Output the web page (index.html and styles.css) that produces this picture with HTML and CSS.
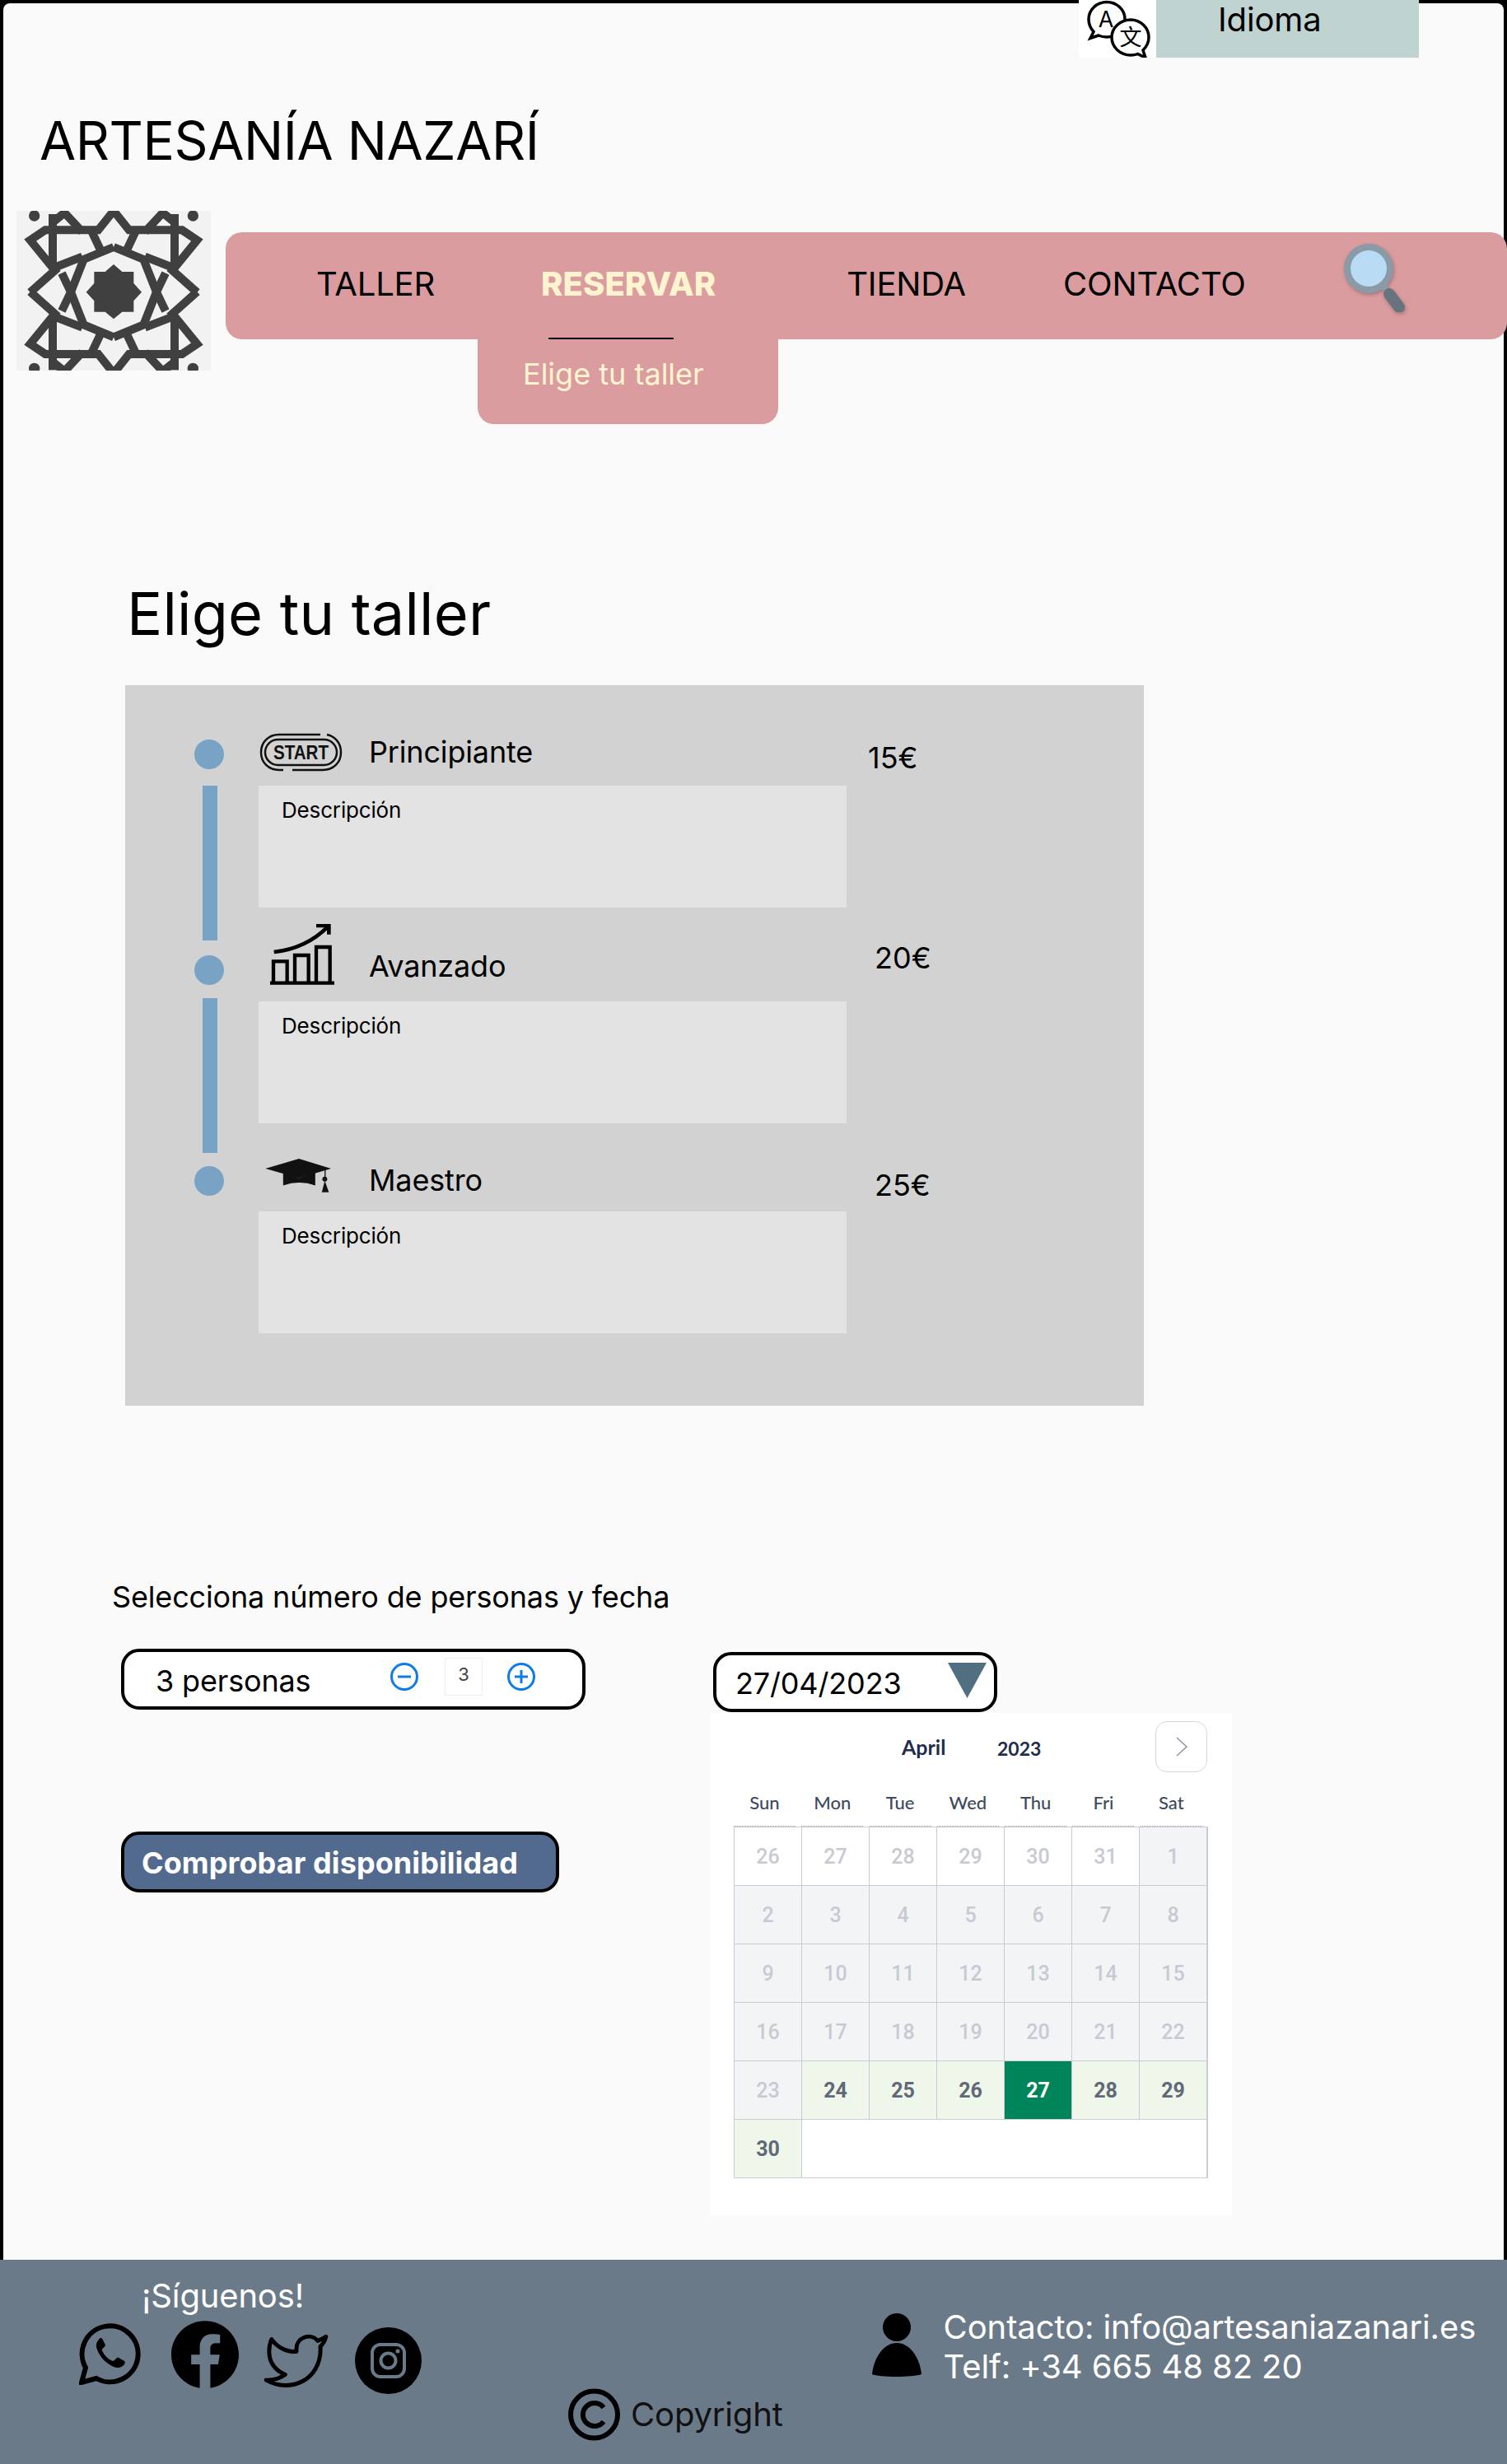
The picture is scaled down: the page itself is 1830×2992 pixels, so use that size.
FILE: index.html
```html
<!DOCTYPE html>
<html lang="es">
<head>
    <meta charset="UTF-8">
    <meta name="viewport" content="width=device-width, initial-scale=1.0">
    <title>Elige tu taller</title>
    <link rel="stylesheet" href="styles.css">
</head>
<body>
<div class="frame">
    <div class="lang-row">
        <div class="lang-icon">
            <svg width="94" height="70" viewBox="0 0 94 70">
                <path class="bubble" d="M34 2.500c-12.500 0-22 9.500-22 21 0 6 2.500 11 6 15l-4 8 10-3.500c3 1.300 6.500 2 10 2 12 0 22-9.500 22-21.500S46 2.500 34 2.500z"/>
                <text x="33" y="33" class="bubble-a">A</text>
                <path class="bubble" d="M63 24c-12.500 0-23 9.500-23 21.500S50.500 67 63 67c3 0 6-.5 8.500-1.500L81 70l-3-9c4-4 7-9.500 7-15.500C85 33.500 75 24 63 24z"/>
                <text x="63" y="55" class="bubble-b">文</text>
            </svg>
        </div>
        <div class="lang-box">Idioma</div>
    </div>

    <h1 class="brand">ARTESANÍA NAZARÍ</h1>

    <header class="top">
        <svg class="logo" width="236" height="194" viewBox="60 48 708 582">
            <defs>
                <g id="tile-quarter" class="tile">
                    <path d="M414 48L358 118H165L110 155L200 265L110 345"/>
                    <path d="M192 60V255"/>
                    <path d="M192 90L235 55L300 125"/>
                    <path d="M335 125L368 195"/>
                    <path d="M205 252L300 215"/>
                    <path d="M414 180L305 225L258 344"/>
                    <path d="M225 275L258 344"/>
                    <circle class="tile-dot" cx="125" cy="66" r="20"/>
                </g>
            </defs>
            <rect x="60" y="48" width="708" height="582" fill="#f2f2f2"/>
            <use href="#tile-quarter"/>
            <use href="#tile-quarter" transform="matrix(-1 0 0 1 828 0)"/>
            <use href="#tile-quarter" transform="matrix(1 0 0 -1 0 688)"/>
            <use href="#tile-quarter" transform="matrix(-1 0 0 -1 828 688)"/>
            <path fill="#404040" d="M414 243L445 270H487V312L516 344L487 376V416H445L414 442L383 416H343V376L314 344L343 312V270H383z"/>
        </svg>
        <nav class="nav">
            <a class="nav-item nav-taller">TALLER</a>
            <a class="nav-item nav-reservar">RESERVAR</a>
            <a class="nav-item nav-tienda">TIENDA</a>
            <a class="nav-item nav-contacto">CONTACTO</a>
            <svg class="search-icon" width="75" height="83" viewBox="0 0 75 83">
                <path d="M47 56l6-4" stroke="#8a9aa6" stroke-width="9" fill="none"/>
                <path d="M55 61L67 77" stroke="#67747f" stroke-width="14" stroke-linecap="round" fill="none"/>
                <circle cx="30" cy="30" r="30" fill="#8a9aa6"/>
                <circle cx="30" cy="30" r="22" fill="#b9dbf3"/>
            </svg>
            <div class="dropdown">
                <div class="dropdown-rule"></div>
                <a class="dropdown-item">Elige tu taller</a>
            </div>
        </nav>
    </header>

    <h2 class="section-title">Elige tu taller</h2>

    <section class="panel">
        <div class="rail">
            <div class="dot"></div>
            <div class="bar bar-one"></div>
            <div class="dot dot-two"></div>
            <div class="bar bar-two"></div>
            <div class="dot dot-three"></div>
        </div>
        <div class="workshops">
            <div class="ws-head ws-head-one">
                <div class="ws-icon">
                    <svg class="icon-start" width="101" height="47" viewBox="0 0 101 47">
                        <path class="start-line" d="M74 2H24C11 2 2 11 2 23.500S11 45 24 45h5M40 45h37c13 0 22-9 22-21.500S91 4 82 2"/>
                        <rect class="start-line" x="7" y="8" width="87" height="31" rx="15.500"/>
                        <text x="50.500" y="32" class="start-text" textLength="67" lengthAdjust="spacingAndGlyphs">START</text>
                    </svg>
                </div>
                <div class="ws-name">Principiante</div>
                <div class="ws-price">15€</div>
            </div>
            <div class="ws-desc">Descripción</div>

            <div class="ws-head ws-head-two">
                <div class="ws-icon">
                    <svg class="icon-chart" width="78" height="74" viewBox="324 66 234 222">
                        <path d="M324 281H558M336 281V202H386V281M414 281V180H464V281M492 281V150H542V281" fill="none" stroke="#000" stroke-width="13"/>
                        <path d="M338 168C410 160 480 130 534 76M492 72H538V104" fill="none" stroke="#000" stroke-width="14"/>
                    </svg>
                </div>
                <div class="ws-name">Avanzado</div>
                <div class="ws-price">20€</div>
            </div>
            <div class="ws-desc">Descripción</div>

            <div class="ws-head ws-head-three">
                <div class="ws-icon">
                    <svg class="icon-cap" width="81" height="41" viewBox="305 922 243 124">
                        <path fill="#111" d="M305 958L428 922L546 958L428 993z"/>
                        <path fill="#111" d="M370 972L428 993L488 972V1020Q430 1000 370 1020z"/>
                        <path stroke="#111" stroke-width="4" d="M524 964V990"/>
                        <circle fill="#111" cx="523" cy="997" r="9"/>
                        <path fill="#111" d="M523 1003L538 1045H512z"/>
                    </svg>
                </div>
                <div class="ws-name">Maestro</div>
                <div class="ws-price">25€</div>
            </div>
            <div class="ws-desc">Descripción</div>
        </div>
    </section>

    <p class="booking-label">Selecciona número de personas y fecha</p>

    <section class="booking">
        <div class="booking-left">
            <div class="pill people">
                <span class="people-text">3 personas</span>
                <svg class="round-btn" width="34" height="34" viewBox="0 0 34 34">
                    <circle cx="17" cy="17" r="15.500"/>
                    <path d="M9 17H25"/>
                </svg>
                <span class="people-count">3</span>
                <svg class="round-btn" width="34" height="34" viewBox="0 0 34 34">
                    <circle cx="17" cy="17" r="15.500"/>
                    <path d="M9 17H25M17 9V25"/>
                </svg>
            </div>
            <button class="check-btn">Comprobar disponibilidad</button>
        </div>
        <div class="booking-right">
            <div class="pill date">
                <span>27/04/2023</span>
                <svg class="date-arrow" width="47" height="43" viewBox="0 0 47 43">
                    <path d="M0 0H47L23.500 43z" fill="#507082"/>
                </svg>
            </div>
            <div class="calendar">
                <div class="cal-head">
                    <span class="cal-month">April</span>
                    <span class="cal-year">2023</span>
                    <span class="cal-next">
                        <svg width="16" height="26" viewBox="0 0 16 26"><path d="M2 2L14 13L2 24" fill="none" stroke="#8d929e" stroke-width="1.500"/></svg>
                    </span>
                </div>
                <div class="cal-week">
                    <span>Sun</span><span>Mon</span><span>Tue</span><span>Wed</span><span>Thu</span><span>Fri</span><span>Sat</span>
                </div>
                <div class="cal-days">
                    <span class="day prev">26</span><span class="day prev">27</span><span class="day prev">28</span><span class="day prev">29</span><span class="day prev">30</span><span class="day prev">31</span><span class="day off">1</span>
                    <span class="day off">2</span><span class="day off">3</span><span class="day off">4</span><span class="day off">5</span><span class="day off">6</span><span class="day off">7</span><span class="day off">8</span>
                    <span class="day off">9</span><span class="day off">10</span><span class="day off">11</span><span class="day off">12</span><span class="day off">13</span><span class="day off">14</span><span class="day off">15</span>
                    <span class="day off">16</span><span class="day off">17</span><span class="day off">18</span><span class="day off">19</span><span class="day off">20</span><span class="day off">21</span><span class="day off">22</span>
                    <span class="day off">23</span><span class="day open">24</span><span class="day open">25</span><span class="day open">26</span><span class="day picked">27</span><span class="day open">28</span><span class="day open">29</span>
                    <span class="day open">30</span><span class="day blank"></span>
                </div>
            </div>
        </div>
    </section>
</div>

<footer class="footer">
    <div class="follow">
        <div class="follow-title">¡Síguenos!</div>
        <div class="social">
            <svg class="social-wa" width="75" height="75" viewBox="0 0 75 75">
                <path d="M3 72l5-18A34 34 0 1 1 21 67z" fill="none" stroke="#000" stroke-width="6" stroke-linejoin="miter"/>
                <path d="M24 20c-3 3-4 7-2 12 3 9 11 17 20 21 5 2 10 1 13-3 1-2 1-3 0-4l-7-4c-1-.5-2 0-3 1l-2 2c-1 1-2 1-3 .5-5-2-9-6-12-12-.5-1 0-2 1-3l2-2c1-1 1-2 .5-3l-3-6c-1-2-3-2-4.500 0z" fill="#000"/>
            </svg>
            <svg class="social-fb" width="82" height="82" viewBox="0 0 24 24">
                <path fill="#000" d="M24 12.073c0-6.627-5.373-12-12-12s-12 5.373-12 12c0 5.990 4.388 10.954 10.125 11.854v-8.385H7.078v-3.470h3.047V9.430c0-3.007 1.792-4.669 4.533-4.669 1.312 0 2.686.235 2.686.235v2.953H15.830c-1.491 0-1.956.925-1.956 1.874v2.250h3.328l-.532 3.470h-2.796v8.385C19.612 23.027 24 18.062 24 12.073z"/>
            </svg>
            <svg class="social-tw" width="81" height="66" viewBox="0 2 24 20">
                <path fill="none" stroke="#000" stroke-width="1.500" stroke-linejoin="round" d="M23 3a10.900 10.900 0 0 1-3 1.530 4.480 4.480 0 0 0-7.860 3v1A10.660 10.660 0 0 1 3 4s-4 9 5 13a11.640 11.640 0 0 1-7 2c9 5 20 0 20-11.500a4.500 4.500 0 0 0-.08-.83A7.720 7.720 0 0 0 23 3z"/>
            </svg>
            <svg class="social-ig" width="81" height="81" viewBox="0 0 81 81">
                <circle cx="40.500" cy="40.500" r="40.500" fill="#000"/>
                <rect x="21" y="21" width="39" height="39" rx="10" fill="none" stroke="#6b7a89" stroke-width="4"/>
                <circle cx="40.500" cy="40.500" r="9" fill="none" stroke="#6b7a89" stroke-width="4"/>
                <circle cx="52" cy="29" r="2.500" fill="#6b7a89"/>
            </svg>
        </div>
    </div>
    <div class="copyright">
        <svg width="63" height="64" viewBox="0 0 63 64">
            <circle cx="31.500" cy="32" r="28.500" fill="none" stroke="#000" stroke-width="6"/>
            <path d="M43 23.500a14 14 0 1 0 0 17" fill="none" stroke="#000" stroke-width="6"/>
        </svg>
        <span class="copyright-text">Copyright</span>
    </div>
    <div class="contact">
        <svg class="contact-icon" width="60" height="79" viewBox="0 0 60 79">
            <circle cx="30" cy="17" r="17"/>
            <path d="M30 36C14 36 2 54 0 74c8 4 50 4 60 0C58 54 46 36 30 36z"/>
        </svg>
        <div class="contact-text">Contacto: info@artesaniazanari.es<br>Telf: +34 665 48 82 20</div>
    </div>
</footer>
</body>
</html>
```

FILE: styles.css
```css
/* Global Styles */
* {
    box-sizing: border-box;
}

body {
    font-family: Inter, "Liberation Sans", sans-serif;
    background-color: #000;
    margin: 0;
    padding-top: 4px;
    width: 1830px;
    height: 2992px;
    overflow: hidden;
    color: #000;
    letter-spacing: -0.16px;
}

svg {
    display: block;
    flex: none;
}

.frame {
    display: flow-root;
    margin: 0 4px;
    height: 2740px;
    background-color: #fafafa;
    border-radius: 8px 8px 0 0;
}

/* Language selector */
.lang-row {
    display: flex;
    height: 70px;
    margin-top: -4px;
    padding-left: 1306px;
}

.lang-icon {
    width: 94px;
    height: 70px;
    background-color: #fff;
    overflow: hidden;
}

.bubble {
    fill: #fff;
    stroke: #000;
    stroke-width: 3.500;
}

.bubble-a,
.bubble-b {
    font-family: Inter, "Noto Sans CJK SC", sans-serif;
    font-size: 27px;
    text-anchor: middle;
}

.lang-box {
    width: 319px;
    height: 70px;
    background-color: #bfd3d1;
    padding-left: 75px;
    font-size: 40px;
    line-height: 48px;
}

.brand {
    margin: 63px 0 47px 44px;
    font-size: 64px;
    font-weight: 400;
    line-height: 76px;
    letter-spacing: -0.41px;
}

/* Header */
.top {
    display: flex;
    align-items: flex-start;
    margin-left: 16px;
}

.tile path {
    fill: none;
    stroke: #404040;
    stroke-width: 30;
}

.tile-dot {
    fill: #404040;
}

.logo {
    margin-right: 18px;
}

.nav {
    position: relative;
    flex: 1;
    display: flex;
    align-items: flex-start;
    height: 130px;
    margin: 26px -4px 0 0;
    padding: 39px 0 0 110px;
    background-color: #da9c9e;
    border-radius: 20px;
}

.nav-item {
    font-size: 40px;
    line-height: 48px;
}

.nav-reservar {
    margin-left: 129px;
    font-weight: 800;
    letter-spacing: 0;
    color: #fff4d0;
}

.nav-tienda {
    margin-left: 159px;
}

.nav-contacto {
    margin-left: 118px;
}

.search-icon {
    margin: -25px 0 0 119px;
    filter: drop-shadow(1px 2px 2px rgba(0, 0, 0, 0.25));
}

.dropdown {
    position: absolute;
    left: 306px;
    top: 128px;
    width: 365px;
    height: 105px;
    background-color: #da9c9e;
    border-radius: 0 0 20px 20px;
}

.dropdown-rule {
    width: 152px;
    height: 2px;
    margin-left: 86px;
    background-color: #000;
}

.dropdown-item {
    display: block;
    margin: 20px 0 0 55px;
    font-size: 36px;
    line-height: 44px;
    letter-spacing: 0;
    color: #fff4d0;
}

.section-title {
    margin: 251px 0 43px 150px;
    font-size: 72px;
    font-weight: 400;
    line-height: 88px;
    letter-spacing: 0.2px;
}

/* Workshop panel */
.panel {
    display: flex;
    width: 1237px;
    height: 875px;
    margin-left: 148px;
    padding-left: 84px;
    background-color: #d2d2d2;
}

.rail {
    width: 36px;
    padding-top: 66px;
}

.dot {
    width: 36px;
    height: 36px;
    border-radius: 50%;
    background-color: #79a3c5;
}

.bar {
    width: 18px;
    margin-left: 10px;
    background-color: #79a3c5;
}

.bar-one {
    height: 188px;
    margin-top: 20px;
}

.dot-two {
    margin-top: 18px;
}

.bar-two {
    height: 188px;
    margin-top: 16px;
}

.dot-three {
    margin-top: 16px;
}

.workshops {
    margin-left: 42px;
}

.ws-head {
    display: flex;
    align-items: flex-end;
}

.ws-head-one {
    height: 122px;
}

.ws-head-two {
    height: 114px;
}

.ws-head-three {
    height: 107px;
}

.ws-icon {
    width: 134px;
}

.icon-start {
    margin: 0 0 17px 1px;
}

.icon-chart {
    margin: 0 0 20px 14px;
}

.icon-cap {
    margin: 0 0 23px 8px;
}

.start-line {
    fill: none;
    stroke: #111;
    stroke-width: 2.500;
}

.start-text {
    font-family: "Liberation Sans", sans-serif;
    font-size: 23px;
    font-weight: 700;
    letter-spacing: 0;
    text-anchor: middle;
    fill: #111;
}

.ws-name {
    width: 606px;
    font-size: 36px;
    line-height: 44px;
}

.ws-head-one .ws-name {
    margin-bottom: 19px;
}

.ws-head-two .ws-name {
    margin-bottom: 21px;
}

.ws-head-three .ws-name {
    margin-bottom: 16px;
}

.ws-price {
    font-size: 36px;
    line-height: 44px;
    letter-spacing: 0;
}

.ws-head-one .ws-price {
    margin-bottom: 12px;
}

.ws-head-two .ws-price {
    margin: 0 0 31px 8px;
}

.ws-head-three .ws-price {
    margin: 0 0 10px 8px;
}

.ws-desc {
    width: 714px;
    height: 148px;
    padding: 14px 0 0 28px;
    background-color: #e4e3e4;
    font-size: 26px;
    line-height: 32px;
}

/* Booking */
.booking-label {
    margin: 210px 0 0 132px;
    font-size: 36px;
    line-height: 44px;
}

.booking {
    display: flex;
    align-items: flex-start;
    margin: 41px 0 0 143px;
}

.pill {
    display: flex;
    align-items: center;
    background-color: #fff;
    border: 4px solid #000;
    border-radius: 22px;
}

.people {
    width: 564px;
    height: 74px;
    padding: 3px 0 0 38px;
    font-size: 36px;
}

.people-text {
    width: 285px;
}

.round-btn {
    margin-top: -10px;
}

.round-btn circle,
.round-btn path {
    fill: none;
    stroke: #0d7ce8;
    stroke-width: 3;
}

.people-count {
    width: 46px;
    height: 46px;
    margin: -10px 30px 0 32px;
    border: 1px solid #eee;
    font-size: 22px;
    line-height: 38px;
    text-align: center;
    color: #444;
    background-color: #fff;
}

.check-btn {
    display: block;
    width: 532px;
    height: 74px;
    margin-top: 148px;
    padding: 2px 0 0 21px;
    background-color: #536a8f;
    border: 4px solid #000;
    border-radius: 22px;
    font-family: inherit;
    font-size: 36px;
    font-weight: 700;
    letter-spacing: 0.08px;
    color: #fff;
    text-align: left;
}

.booking-right {
    margin-left: 151px;
    padding-top: 4px;
}

.date {
    width: 345px;
    height: 73px;
    margin-left: 4px;
    padding: 3px 9px 0 23px;
    justify-content: space-between;
    font-size: 36px;
}

.date-arrow {
    margin-top: -7px;
}

/* Calendar */
.calendar {
    width: 634px;
    height: 610px;
    margin-top: 1px;
    padding: 10px 29px 0;
    background-color: #fff;
    font-family: Lato, "Liberation Sans", sans-serif;
    letter-spacing: 0;
}

.cal-head {
    display: flex;
    align-items: center;
    height: 62px;
    padding-left: 204px;
    font-size: 25px;
    font-weight: 700;
    color: #1f2d4d;
}

.cal-month {
    width: 116px;
}

.cal-year {
    width: 192px;
    padding-top: 4px;
    font-size: 23px;
}

.cal-next {
    display: flex;
    align-items: center;
    justify-content: center;
    width: 63px;
    height: 62px;
    border: 1px solid #d4d7de;
    border-radius: 14px;
}

.cal-week {
    display: grid;
    grid-template-columns: repeat(7, 75px);
    column-gap: 7.300px;
    height: 57px;
    margin-top: 9px;
    padding-top: 10px;
}

.cal-week span {
    border-bottom: 1px dotted #9aa0ab;
    font-size: 22px;
    font-weight: 500;
    line-height: 36px;
    height: 47px;
    text-align: center;
    color: #3d4a5f;
}

.cal-days {
    display: grid;
    grid-template-columns: repeat(7, 81px);
    grid-auto-rows: 70px;
    gap: 1px;
    width: 576px;
    padding: 1px;
    background-color: #c9ccd6;
}

.day {
    display: flex;
    align-items: center;
    justify-content: center;
    font-family: Roboto, "Liberation Sans", sans-serif;
    font-size: 25px;
    font-weight: 500;
}

.prev {
    background-color: #fff;
    color: #c8cad3;
}

.off {
    background-color: #f3f4f6;
    color: #c8cad3;
}

.open {
    background-color: #eef7e9;
    color: #626878;
    font-weight: 700;
}

.picked {
    background-color: #00855a;
    color: #fff;
    font-weight: 700;
}

.blank {
    grid-column: span 6;
    background-color: #fff;
}

/* Footer */
.footer {
    display: flex;
    align-items: flex-start;
    height: 248px;
    padding-left: 96px;
    background-color: #6b7a89;
}

.follow {
    width: 416px;
    padding-top: 20px;
}

.follow-title {
    margin-left: 76px;
    font-size: 40px;
    line-height: 48px;
    color: #fff;
}

.social {
    display: flex;
    align-items: flex-start;
}

.social-wa {
    margin-top: 9px;
}

.social-fb {
    margin: 6px 0 0 37px;
}

.social-tw {
    margin: 22px 0 0 29px;
}

.social-ig {
    margin: 14px 0 0 31px;
}

.copyright {
    display: flex;
    align-items: flex-start;
    margin: 156px 0 0 178px;
}

.copyright-text {
    margin: 8px 0 0 13px;
    font-size: 40px;
    line-height: 48px;
    color: #111;
}

.contact {
    display: flex;
    align-items: flex-start;
    margin: 56px 0 0 108px;
}

.contact-icon {
    margin-top: 9px;
}

.contact-text {
    margin: 2px 0 0 27px;
    font-size: 40px;
    line-height: 48px;
    letter-spacing: -0.1px;
    color: #fff;
}
```
